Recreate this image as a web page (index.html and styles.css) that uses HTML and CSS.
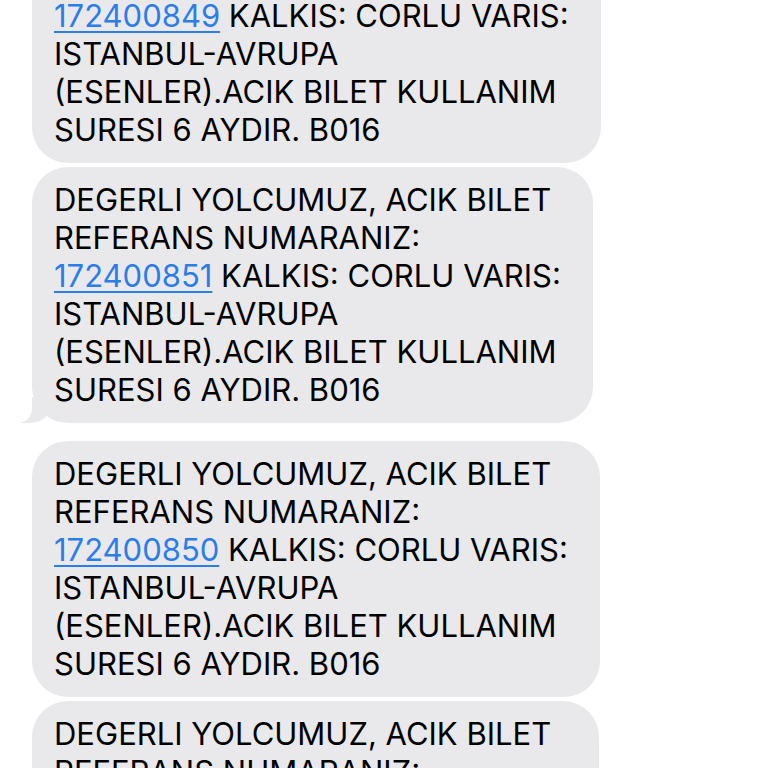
FILE: index.html
```html
<!DOCTYPE html>
<html lang="tr">
<head>
    <meta charset="UTF-8">
    <meta name="viewport" content="width=device-width, initial-scale=1.0">
    <title>Mesajlar</title>
    <link rel="stylesheet" href="styles.css">
</head>
<body>
    <div class="thread">
        <div class="bubble">
            DEGERLI YOLCUMUZ, ACIK BILET<br>
            REFERANS NUMARANIZ:<br>
            <a href="#" class="ref">172400849</a> KALKIS: CORLU VARIS:<br>
            ISTANBUL-AVRUPA<br>
            (ESENLER).ACIK BILET KULLANIM<br>
            SURESI 6 AYDIR. B016
        </div>

        <div class="bubble tail">
            DEGERLI YOLCUMUZ, ACIK BILET<br>
            REFERANS NUMARANIZ:<br>
            <a href="#" class="ref">172400851</a> KALKIS: CORLU VARIS:<br>
            ISTANBUL-AVRUPA<br>
            (ESENLER).ACIK BILET KULLANIM<br>
            SURESI 6 AYDIR. B016
        </div>

        <div class="bubble">
            DEGERLI YOLCUMUZ, ACIK BILET<br>
            REFERANS NUMARANIZ:<br>
            <a href="#" class="ref">172400850</a> KALKIS: CORLU VARIS:<br>
            ISTANBUL-AVRUPA<br>
            (ESENLER).ACIK BILET KULLANIM<br>
            SURESI 6 AYDIR. B016
        </div>

        <div class="bubble">
            DEGERLI YOLCUMUZ, ACIK BILET<br>
            REFERANS NUMARANIZ:<br>
            <a href="#" class="ref">172400852</a> KALKIS: CORLU VARIS:<br>
            ISTANBUL-AVRUPA<br>
            (ESENLER).ACIK BILET KULLANIM<br>
            SURESI 6 AYDIR. B016
        </div>
    </div>
</body>
</html>
```

FILE: styles.css
```css
* {
    margin: 0;
    padding: 0;
    box-sizing: border-box;
}

body {
    background: #fff;
    font-family: 'Inter', 'Roboto', sans-serif;
    overflow: hidden;
}

.thread {
    display: flex;
    flex-direction: column;
    align-items: flex-start;
    gap: 4px;
    padding-left: 32px;
    margin-top: -93px;
}

.bubble {
    position: relative;
    background: #e9e9eb;
    color: #000;
    font-size: 31px;
    line-height: 38px;
    padding: 14px 32px 14px 22px;
    border-radius: 36px;
    white-space: nowrap;
}

.ref {
    color: #2b7de9;
    text-decoration: underline;
    text-decoration-thickness: 2px;
    text-underline-offset: 4px;
}

/* iOS style tail on the last bubble of a group */
.tail {
    margin-bottom: 14px;
}

.tail::before {
    content: "";
    position: absolute;
    left: -12px;
    bottom: 0;
    width: 30px;
    height: 26px;
    background: #e9e9eb;
    border-bottom-right-radius: 20px 16px;
}

.tail::after {
    content: "";
    position: absolute;
    left: -30px;
    bottom: 0;
    width: 30px;
    height: 26px;
    background: #fff;
    border-bottom-right-radius: 14px;
}
```
